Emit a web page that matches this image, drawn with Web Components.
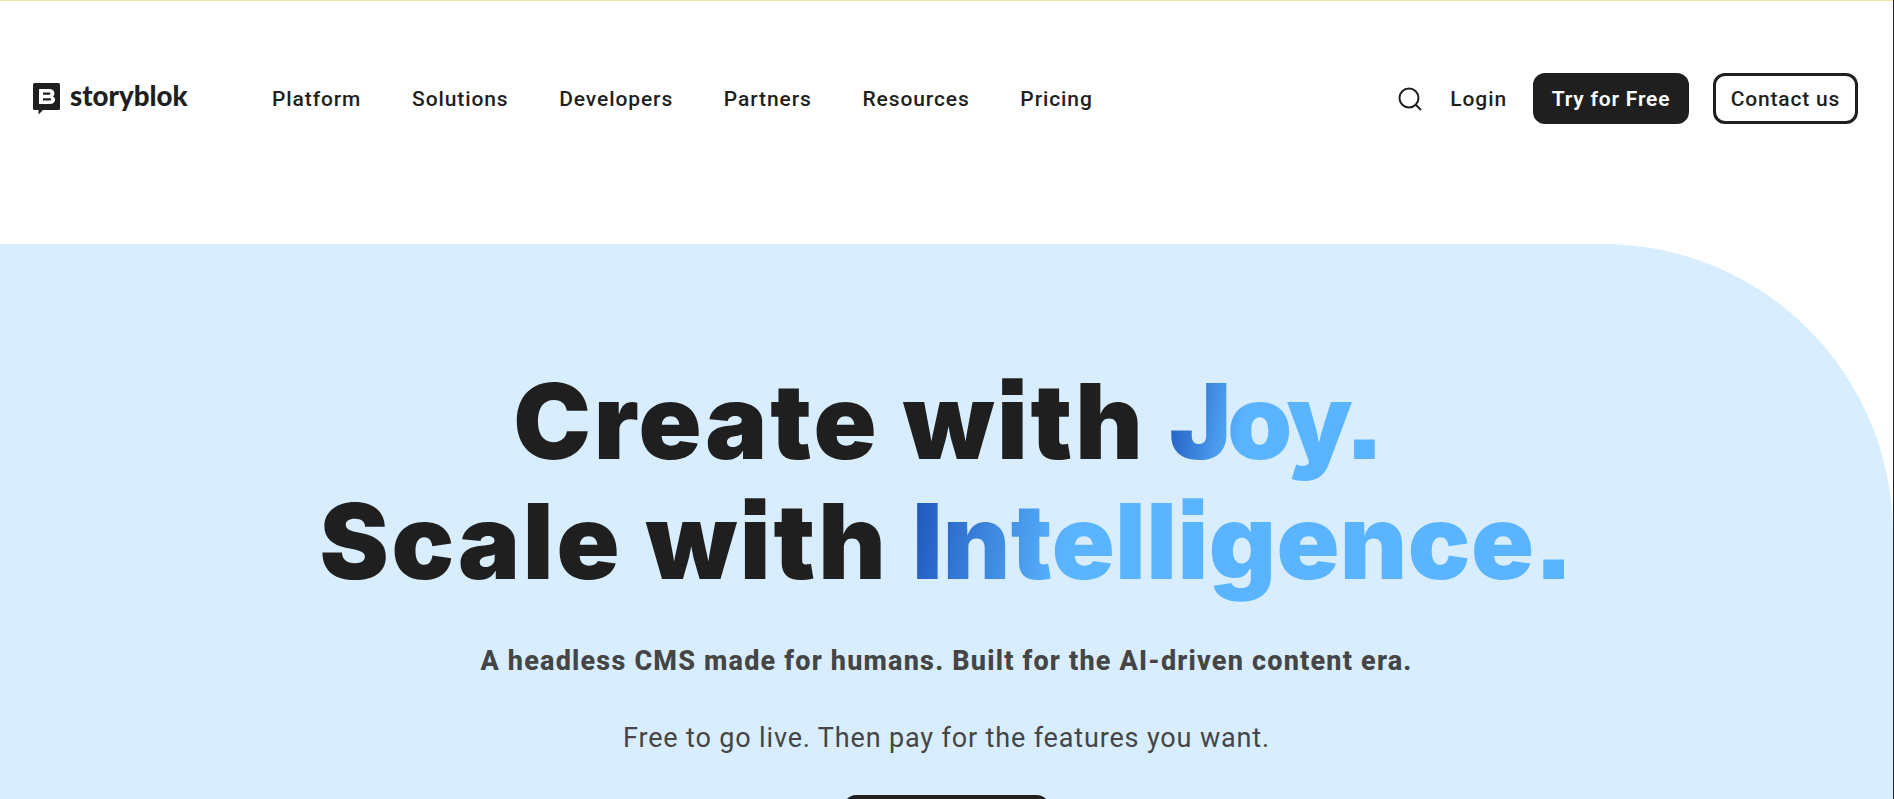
<!DOCTYPE html>
<html lang="en">
<head>
<meta charset="utf-8">
<title>Storyblok</title>
<style>
  html, body { margin: 0; height: 100%; overflow: hidden; background: #fff; }
  body { font-family: Roboto, "Liberation Sans", sans-serif; color: #1f1f1f; box-sizing: border-box; border-right: 1px solid #222; }
</style>
</head>
<body>
<sb-page>
  <sb-header>
    <sb-logo slot="logo"></sb-logo>
    <sb-nav-link>Platform</sb-nav-link>
    <sb-nav-link>Solutions</sb-nav-link>
    <sb-nav-link>Developers</sb-nav-link>
    <sb-nav-link>Partners</sb-nav-link>
    <sb-nav-link>Resources</sb-nav-link>
    <sb-nav-link>Pricing</sb-nav-link>
    <sb-search slot="actions"></sb-search>
    <sb-nav-link slot="actions" class="login">Login</sb-nav-link>
    <sb-button slot="actions" variant="solid">Try for Free</sb-button>
    <sb-button slot="actions" variant="outline">Contact us</sb-button>
  </sb-header>
  <sb-hero>
    <span slot="line1">Create with <sb-gradient stop="36%" spacing="-4px">Joy.</sb-gradient></span>
    <span slot="line2">Scale with <sb-gradient stop="24%" spacing="0.4px">Intelligence.</sb-gradient></span>
    <span slot="lead">A headless CMS made for humans. Built for the AI-driven content era.</span>
    <span slot="note">Free to go live. Then pay for the features you want.</span>
  </sb-hero>
</sb-page>

<script>
class SbPage extends HTMLElement {
  connectedCallback() {
    this.attachShadow({ mode: 'open' });
    this.shadowRoot.innerHTML = `
      <style>
        :host { display: flex; flex-direction: column; height: 100vh; border-top: 1px solid #fde3a2; box-sizing: border-box; overflow: hidden; }
      </style>
      <slot></slot>
    `;
  }
}

class SbHeader extends HTMLElement {
  connectedCallback() {
    this.attachShadow({ mode: 'open' });
    this.shadowRoot.innerHTML = `
      <style>
        :host { display: flex; align-items: center; height: 243px; flex: none; box-sizing: border-box; padding: 0 35px 48px 32px; }
        .logo { display: flex; width: 240px; flex: none; }
        nav { display: flex; gap: 50.7px; flex: 1; }
        .actions { display: flex; align-items: center; }
      </style>
      <div class="logo"><slot name="logo"></slot></div>
      <nav><slot></slot></nav>
      <div class="actions"><slot name="actions"></slot></div>
    `;
  }
}

class SbLogo extends HTMLElement {
  connectedCallback() {
    this.attachShadow({ mode: 'open' });
    this.shadowRoot.innerHTML = `
      <style>
        :host { display: flex; align-items: center; gap: 9px; }
        svg { display: block; }
        span { font: 900 27.700px/1 Lato, sans-serif; color: #1f1f1f; margin-bottom: 6px; }
      </style>
      <svg width="29" height="33" viewBox="0 0 29 33">
        <path fill="#1f1f1f" fill-rule="evenodd" d="M2.500 1h24A1.500 1.500 0 0 1 28 2.500V26.500A1.500 1.500 0 0 1 26.500 28H11l-4.500 4.500V28H2.500A1.500 1.500 0 0 1 1 26.500V2.500A1.500 1.500 0 0 1 2.500 1ZM7 7V22H18C21 22 23 20.200 23 17.800C23 16.300 22.300 15.100 21 14.400C22 13.600 22.400 12.600 22.400 11.400C22.400 8.800 20.500 7 17.500 7ZM11 10.500H17C18 10.500 18.500 10.900 18.500 11.600C18.500 12.300 18 12.700 17 12.700H11ZM11 16.200H17.500C18.600 16.200 19.200 16.700 19.200 17.400C19.200 18.100 18.600 18.500 17.500 18.500H11Z"/>
      </svg>
      <span>storyblok</span>
    `;
  }
}

class SbNavLink extends HTMLElement {
  connectedCallback() {
    this.attachShadow({ mode: 'open' });
    this.shadowRoot.innerHTML = `
      <style>
        :host { display: block; font: 500 21px/24px Roboto, sans-serif; letter-spacing: 0.9px; color: #1f1f1f; white-space: nowrap; }
        :host(.login) { margin-right: 26px; }
      </style>
      <slot></slot>
    `;
  }
}

class SbSearch extends HTMLElement {
  connectedCallback() {
    this.attachShadow({ mode: 'open' });
    this.shadowRoot.innerHTML = `
      <style>
        :host { display: block; margin-right: 28px; height: 24px; }
        svg { display: block; }
      </style>
      <svg width="24" height="24" viewBox="0 0 24 24" fill="none" stroke="#1f1f1f" stroke-width="2">
        <circle cx="11" cy="11" r="9.500"/>
        <path d="M18 18l5 5"/>
      </svg>
    `;
  }
}

class SbButton extends HTMLElement {
  connectedCallback() {
    this.attachShadow({ mode: 'open' });
    this.shadowRoot.innerHTML = `
      <style>
        :host { display: flex; align-items: center; justify-content: center; box-sizing: border-box; height: 51px; border-radius: 12px; font: 600 21px/24px Roboto, sans-serif; letter-spacing: 0.8px; white-space: nowrap; border: 3px solid #1f1f1f; }
        :host([variant="solid"]) { width: 156px; background: #1f1f1f; color: #fff; margin-right: 24px; }
        :host([variant="outline"]) { width: 145px; background: #fff; color: #1f1f1f; font-weight: 500; }
      </style>
      <slot></slot>
    `;
  }
}

class SbGradient extends HTMLElement {
  connectedCallback() {
    this.attachShadow({ mode: 'open' });
    const stop = this.getAttribute('stop') || '30%';
    const spacing = this.getAttribute('spacing') || 'normal';
    this.shadowRoot.innerHTML = `
      <style>
        :host { display: inline-block; padding-bottom: 0.2em; margin-bottom: -0.2em; letter-spacing: ${spacing}; background: linear-gradient(100deg, #1d54bb 0%, #5ab4ff ${stop}); -webkit-background-clip: text; background-clip: text; color: transparent; -webkit-text-fill-color: transparent; }
      </style>
      <slot></slot>
    `;
  }
}

class SbHero extends HTMLElement {
  connectedCallback() {
    this.attachShadow({ mode: 'open' });
    this.shadowRoot.innerHTML = `
      <style>
        :host { display: flex; flex-direction: column; align-items: center; flex: 1; background: #d8eeff; border-top-right-radius: 290px; padding-top: 117px; text-align: center; }
        h1 { margin: 0; font: 900 104px/120px Inter, sans-serif; font-feature-settings: "ss07", "ss08"; letter-spacing: 2.8px; color: #1f1f1f; }
        h1 div { white-space: nowrap; }
        .lead { margin: 42px 0 0; font: 800 27px/36px Roboto, sans-serif; letter-spacing: 1.2px; color: #454545; }
        .note { margin: 41px 0 0; font: 400 27px/36px Roboto, sans-serif; letter-spacing: 0.85px; color: #454545; }
        .cta { margin-top: 39px; width: 205px; height: 51px; flex: none; border-radius: 12px; background: #1f1f1f; }
      </style>
      <h1>
        <div><slot name="line1"></slot></div>
        <div><slot name="line2"></slot></div>
      </h1>
      <p class="lead"><slot name="lead"></slot></p>
      <p class="note"><slot name="note"></slot></p>
      <div class="cta"></div>
    `;
  }
}

customElements.define('sb-page', SbPage);
customElements.define('sb-header', SbHeader);
customElements.define('sb-logo', SbLogo);
customElements.define('sb-nav-link', SbNavLink);
customElements.define('sb-search', SbSearch);
customElements.define('sb-button', SbButton);
customElements.define('sb-gradient', SbGradient);
customElements.define('sb-hero', SbHero);
</script>
</body>
</html>
